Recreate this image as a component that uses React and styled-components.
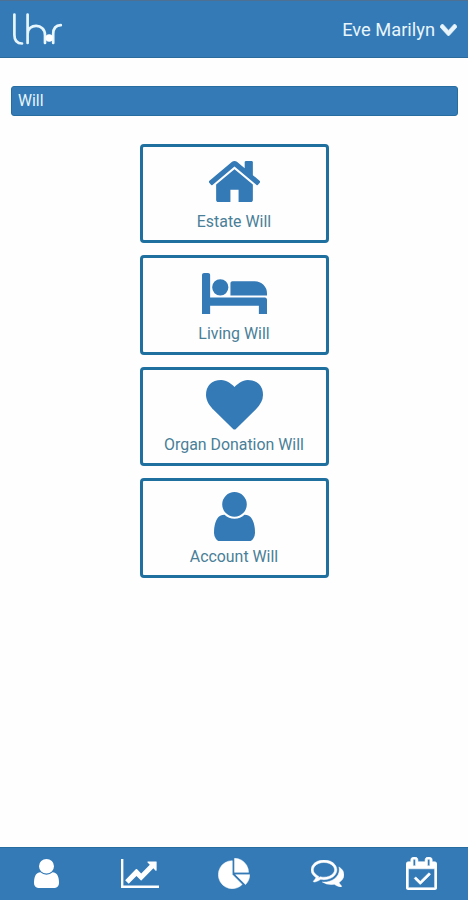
import React from 'react';
import styled, { createGlobalStyle } from 'styled-components';

const GlobalStyle = createGlobalStyle`
  * {
    box-sizing: border-box;
  }

  body {
    margin: 0;
    background: #fefefe;
    font-family: Roboto, 'Liberation Sans', sans-serif;
  }
`;

const Screen = styled.div`
  display: flex;
  flex-direction: column;
  width: 100%;
  height: 100vh;
`;

const Header = styled.header`
  display: flex;
  justify-content: space-between;
  align-items: center;
  height: 58px;
  padding: 1px 11px 0 12px;
  background: #337ab7;
  border-top: 1px solid #4d7093;
  border-bottom: 1px solid #2a6b9c;
  flex-shrink: 0;
`;

const LogoMark = styled.svg`
  display: block;
  width: 52px;
  height: 36px;
  fill: none;
  stroke: #e6f6fc;
  stroke-width: 2.7;
  stroke-linecap: round;
`;

const UserMenu = styled.button`
  display: flex;
  align-items: center;
  gap: 5px;
  padding: 0;
  border: none;
  background: none;
  color: #e8f5fb;
  font-family: inherit;
  font-size: 18.3px;
  line-height: 24px;
`;

const Main = styled.main`
  flex: 1;
  padding: 28px 10px 0 11px;
`;

const SectionTitle = styled.h1`
  height: 30px;
  margin: 0 0 28px;
  padding: 0 6px;
  background: #337ab7;
  border: 1px solid #286d9f;
  border-radius: 3px;
  color: #e8f5fb;
  font-size: 15.8px;
  font-weight: 400;
  line-height: 28px;
`;

const CardList = styled.div`
  display: flex;
  flex-direction: column;
  align-items: center;
  gap: 12px;
`;

const Card = styled.button`
  display: flex;
  flex-direction: column;
  align-items: center;
  justify-content: flex-end;
  width: 189px;
  height: 99.4px;
  padding: 0 1px 8px 0;
  background: #fefefe;
  border: 3px solid #1f6f9f;
  border-radius: 4px;
  color: #4a7f98;
  font-family: inherit;
`;

const CardLabel = styled.span`
  margin-top: ${({ $gap }) => $gap}px;
  font-size: 15.9px;
  line-height: 20px;
  white-space: nowrap;
`;

const BottomNav = styled.nav`
  display: grid;
  grid-template-columns: repeat(5, 1fr);
  align-items: center;
  height: 53px;
  padding-bottom: 2px;
  background: #337ab7;
  border-top: 1px solid #286d9f;
  flex-shrink: 0;
`;

const NavItem = styled.a`
  display: flex;
  justify-content: center;
  color: #fff;
`;

const Glyph = styled.svg`
  display: block;
  width: ${({ $w }) => $w}px;
  height: ${({ $h }) => $h}px;
  fill: ${({ $color }) => $color || 'currentColor'};
`;

const icons = {
  home: {
    box: '96 253 1600 1283',
    d: 'M1472 992v480q0 26-19 45t-45 19h-384v-384h-256v384h-384q-26 0-45-19t-19-45v-480q0-1 .5-3t.5-3l575-474 575 474q1 2 1 6zm223-69l-62 74q-8 9-21 11h-3q-13 0-21-7l-692-577-692 577q-12 8-24 7-13-2-21-11l-62-74q-8-10-7-23.5t11-21.5l719-599q32-26 76-26t76 26l244 204v-195q0-14 9-23t23-9h192q14 0 23 9t9 23v408l219 182q10 8 11 21.5t-7 23.5z',
  },
  bed: {
    box: '0 256 2048 1280',
    d: 'M256 1024h1728q26 0 45 19t19 45v448h-256v-256h-1536v256h-256v-1216q0-26 19-45t45-19h128q26 0 45 19t19 45v704zm576-320q0-106-75-181t-181-75-181 75-75 181 75 181 181 75 181-75 75-181zm1216 256v-64q0-159-112.5-271.5t-271.5-112.5h-704q-26 0-45 19t-19 45v384h1152z',
  },
  heart: {
    box: '0 128 1792 1536',
    d: 'M896 1664q-26 0-44-18l-624-602q-10-8-27.5-26t-55.5-65.5-68-97.5-53.5-121-23.5-138q0-220 127-344t351-124q62 0 126.5 21.5t120 58 95.5 68.5 76 68q36-36 76-68t95.5-68.5 120-58 126.5-21.5q224 0 351 124t127 344q0 221-229 450l-623 600q-18 18-44 18z',
  },
  user: {
    box: '256 128 1280 1536',
    d: 'M1536 1399q0 109-62.5 187t-150.5 78h-854q-88 0-150.5-78t-62.5-187q0-85 8.5-160.5t31.5-152 58.5-131 94-89 134.5-34.5q131 128 313 128t313-128q76 0 134.5 34.5t94 89 58.5 131 31.5 152 8.5 160.5zm-256-887q0 159-112.5 271.5t-271.5 112.5-271.5-112.5-112.5-271.5 112.5-271.5 271.5-112.5 271.5 112.5 112.5 271.5z',
  },
  chart: {
    box: '0 128 2048 1536',
    d: 'M2048 1536v128h-2048v-1536h128v1408h1920zm-128-1248v435q0 21-19.5 29.5t-35.5-7.5l-121-121-633 633q-10 10-23 10t-23-10l-233-233-416 416-192-192 585-585q10-10 23-10t23 10l233 233 464-464-121-121q-16-16-7.5-35.5t29.5-19.5h435q14 0 23 9t9 23z',
  },
  pie: {
    box: '-20 -20 1768 1704',
    weight: 30,
    d: 'M768 890l546 546q-106 108-247.5 168t-298.5 60q-209 0-385.5-103t-279.5-279.5-103-385.5 103-385.5 279.5-279.5 385.5-103v762zm187 6h773q0 157-60 298.5t-168 247.5zm709-128h-768v-768q209 0 385.5 103t279.5 279.5 103 385.5z',
  },
  comments: {
    box: '0 256 1792 1408',
    weight: 25,
    d: 'M704 384q-153 0-286 52t-211.5 141-78.5 191q0 82 53 158t149 132l97 56-35 84q34-20 62-39l44-31 53 10q78 14 153 14 153 0 286-52t211.5-141 78.5-191-78.5-191-211.5-141-286-52zm0-128q191 0 353.5 68.5t256.5 186.5 94 257-94 257-256.5 186.5-353.5 68.5q-86 0-176-16-124 88-278 128-36 9-86 16h-3q-11 0-20.5-8t-11.5-21q-1-3-1-6.5t.5-6.5 2-6l2.5-5 3.5-5.5 4-5 4.5-5 4-4.5q5-6 23-25t26-29.5 22.5-29 25-38.5 20.5-44q-124-72-195-177t-71-224q0-139 94-257t256.5-186.5 353.5-68.5zm822 1169q10 24 20.5 44t25 38.5 22.5 29 26 29.5 23 25q1 1 4 4.5t4.5 5 4 5 3.5 5.5l2.5 5 2 6 .5 6.5-1 6.5q-3 14-13 22t-22 7q-50-7-86-16-154-40-278-128-90 16-176 16-271 0-472-132 58 4 88 4 161 0 309-45t264-129q125-92 192-212t67-254q0-77-23-152 129 71 204 178t75 230q0 120-71 224.5t-195 176.5z',
  },
  calendar: {
    box: '0 0 1664 1792',
    weight: 30,
    d: 'M1303 964l-512 512q-10 9-23 9t-23-9l-288-288q-9-10-9-23t9-22l46-46q9-9 22-9t23 9l220 220 444-444q10-9 23-9t22 9l46 46q9 9 9 22t-9 23zm-1175 700h1408v-1024h-1408v1024zm384-1216v-288q0-14-9-23t-23-9h-64q-14 0-23 9t-9 23v288q0 14 9 23t23 9h64q14 0 23-9t9-23zm768 0v-288q0-14-9-23t-23-9h-64q-14 0-23 9t-9 23v288q0 14 9 23t23 9h64q14 0 23-9t9-23zm384-64v1280q0 52-38 90t-90 38h-1408q-52 0-90-38t-38-90v-1280q0-52 38-90t90-38h128v-96q0-66 47-113t113-47h64q66 0 113 47t47 113v96h384v-96q0-66 47-113t113-47h64q66 0 113 47t47 113v96h128q52 0 90 38t38 90z',
  },
  chevron: {
    box: '90 533 1612 1035',
    weight: 60,
    d: 'M1683 808l-742 741q-19 19-45 19t-45-19l-742-741q-19-19-19-45.5t19-45.5l166-165q19-19 45-19t45 19l531 531 531-531q19-19 45-19t45 19l166 165q19 19 19 45.5t-19 45.5z',
  },
};

const Icon = ({ name, w, h, color }) => (
  <Glyph viewBox={icons[name].box} preserveAspectRatio="none" $w={w} $h={h} $color={color} aria-hidden="true">
    <path d={icons[name].d} stroke="currentColor" strokeWidth={icons[name].weight || 0} />
  </Glyph>
);

const Logo = () => (
  <LogoMark viewBox="0 0 52 36" aria-label="lhr">
    <path d="M2.4 2.5V23Q2.4 31.5 10 31.5" />
    <path d="M15.6 2.5V31M15.6 22C15.6 11 33 11 33 23V31" />
    <path d="M41.2 31V22Q41.2 13.5 48.8 13.2" />
    <circle cx="37.2" cy="26" r="3.7" fill="#fff" stroke="none" />
  </LogoMark>
);

const wills = [
  { label: 'Estate Will', icon: 'home', w: 51, h: 41, gap: 10 },
  { label: 'Living Will', icon: 'bed', w: 65, h: 41, gap: 10 },
  { label: 'Organ Donation Will', icon: 'heart', w: 57, h: 49.5, gap: 5.5 },
  { label: 'Account Will', icon: 'user', w: 41, h: 49.5, gap: 5.5 },
];

const tabs = [
  { icon: 'user', w: 25, h: 29 },
  { icon: 'chart', w: 38, h: 29 },
  { icon: 'pie', w: 32, h: 31 },
  { icon: 'comments', w: 33, h: 27 },
  { icon: 'calendar', w: 31, h: 33 },
];

const App = () => {
  return (
    <Screen>
      <GlobalStyle />
      <Header>
        <Logo />
        <UserMenu>
          Eve Marilyn
          <Icon name="chevron" w={17} h={12} />
        </UserMenu>
      </Header>
      <Main>
        <SectionTitle>Will</SectionTitle>
        <CardList>
          {wills.map((will) => (
            <Card key={will.label}>
              <Icon name={will.icon} w={will.w} h={will.h} color="#337ab7" />
              <CardLabel $gap={will.gap}>{will.label}</CardLabel>
            </Card>
          ))}
        </CardList>
      </Main>
      <BottomNav>
        {tabs.map((tab) => (
          <NavItem key={tab.icon}>
            <Icon name={tab.icon} w={tab.w} h={tab.h} />
          </NavItem>
        ))}
      </BottomNav>
    </Screen>
  );
};

export default App;
